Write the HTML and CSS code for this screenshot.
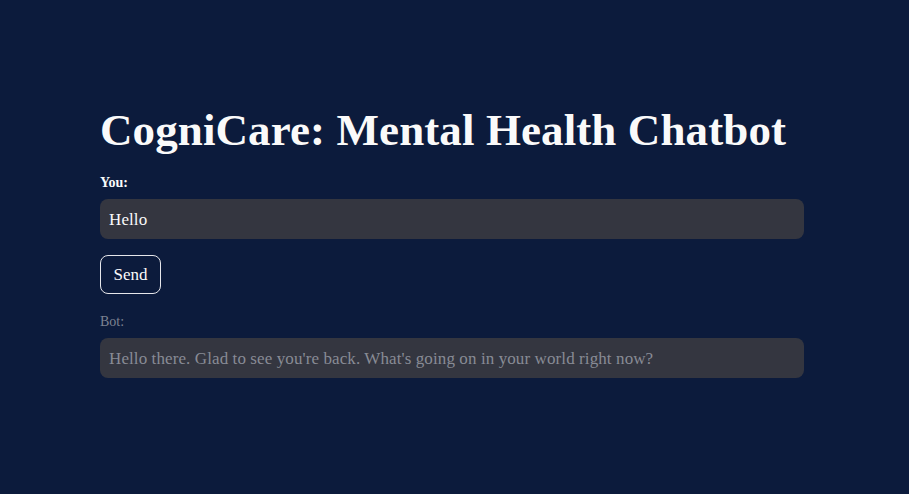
FILE: index.html
```html
<!DOCTYPE html>
<html>
<head>
<meta charset="utf-8">
<link rel="stylesheet" href="styles.css">
</head>
<body>
<main class="main">
  <h1 class="title">CogniCare: Mental Health Chatbot</h1>
  <div class="field">
    <label class="label strong">You:</label>
    <div class="input">Hello</div>
  </div>
  <div class="btn-row"><button class="btn">Send</button></div>
  <div class="field disabled">
    <label class="label">Bot:</label>
    <div class="input">Hello there. Glad to see you're back. What's going on in your world right now?</div>
  </div>
</main>
</body>
</html>
```
FILE: styles.css
```css
html, body {
  margin: 0;
  padding: 0;
  background: #0c1b3c;
  height: 100%;
}
body {
  font-family: "Liberation Serif", "DejaVu Serif", serif;
  color: #fafafa;
}
.main {
  width: 704px;
  margin-left: 100px;
  padding-top: 100px;
  display: flex;
  flex-direction: column;
}
.title {
  margin: 0;
  font-size: 45px;
  font-weight: 700;
  line-height: 60px;
  height: 60px;
  letter-spacing: 0.1px;
}
.field {
  display: flex;
  flex-direction: column;
  margin-top: 14px;
}
.label {
  font-size: 14px;
  line-height: 18px;
  height: 20px;
  margin-bottom: 5px;
}
.label.strong {
  font-weight: 700;
}
.input {
  height: 40px;
  box-sizing: border-box;
  background: #343640;
  border-radius: 8px;
  padding: 0 9px;
  font-size: 17px;
  line-height: 41px;
  color: #fafafa;
  letter-spacing: 0.1px;
}
.btn-row {
  margin-top: 16px;
}
.btn {
  font-family: inherit;
  font-size: 17px;
  color: #fafafa;
  background: transparent;
  border: 1px solid #e6e6ea;
  border-radius: 8px;
  height: 39px;
  width: 61px;
  padding: 0;
}
.field.disabled {
  margin-top: 19px;
}
.disabled .label {
  color: #7c8291;
}
.disabled .input {
  color: #888b95;
}
```
